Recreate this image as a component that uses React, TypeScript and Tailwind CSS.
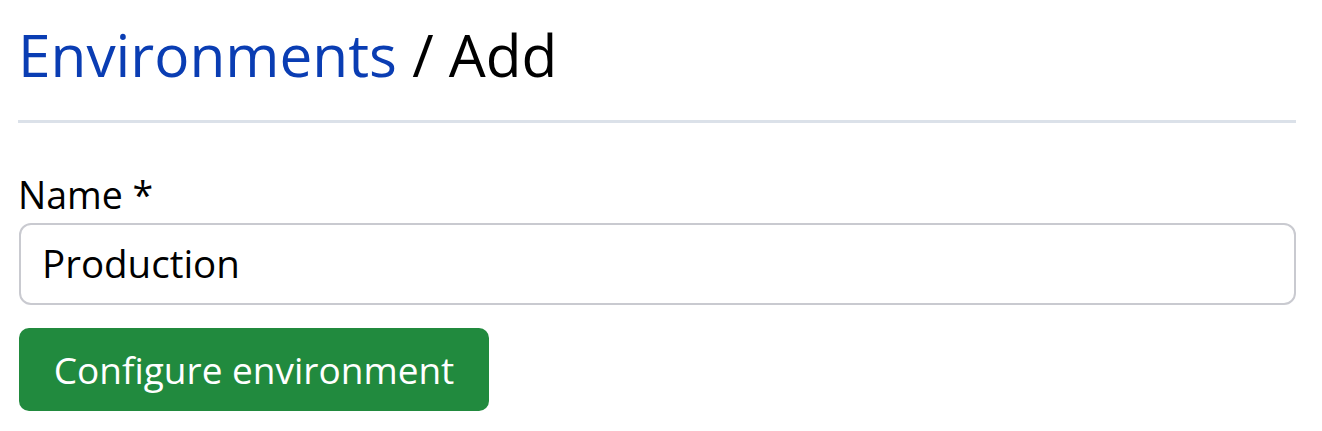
export default function App() {
  return (
    <div
      className="w-[1322px] h-[431px] bg-white pl-[18px] pr-[26px] pt-[14px]"
      style={{ fontFamily: '"Open Sans", "Noto Sans", sans-serif' }}
    >
      <h1 className="text-[58.5px] leading-[80px] text-black">
        <a className="text-[#0a3db3]">Environments</a> / Add
      </h1>
      <div className="mt-[26px] h-[3px] bg-[#dbe1e9]" />
      <div className="mt-[52px] text-[37.5px] leading-[40px] text-black">Name *</div>
      <div className="mt-[8px] h-[82px] rounded-[12px] border-2 border-[#c9cad0] flex items-center pl-[21px] text-[38.5px] text-black ml-[1px]">
        Production
      </div>
      <button className="mt-[23px] ml-[1px] h-[83px] w-[470px] rounded-[10px] bg-[#218a3e] text-white text-[37px] flex items-center justify-center">
        Configure environment
      </button>
    </div>
  );
}
